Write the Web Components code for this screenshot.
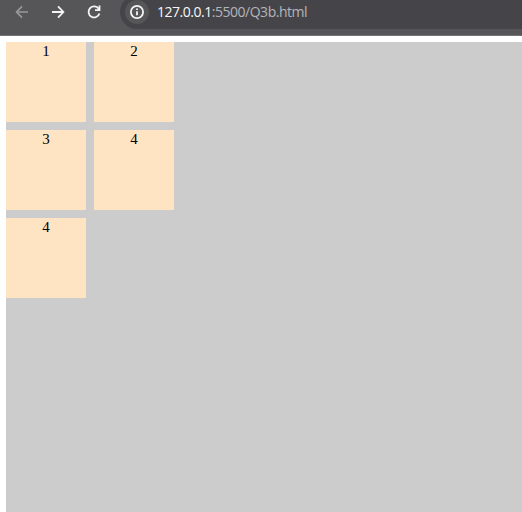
<!DOCTYPE html>
<html lang="en">
<head>
<meta charset="utf-8">
<title>Q3b</title>
<style>
html, body { margin: 0; height: 100%; overflow: hidden; background: #fff; }
body { display: flex; flex-direction: column; }
</style>
</head>
<body>
<browser-bar></browser-bar>
<box-grid>
  <box-item>1</box-item><box-item>2</box-item>
  <box-item>3</box-item><box-item>4</box-item>
  <box-item>4</box-item>
</box-grid>
<script>
class BrowserBar extends HTMLElement {
  constructor() {
    super();
    this.attachShadow({ mode: "open" }).innerHTML = `
    <style>
      :host { display: flex; flex: none; box-sizing: border-box; height: 36px; background: #565558; border-bottom: 1px solid #757275; align-items: flex-start; padding-left: 14px; overflow: hidden; }
      svg { display: block; fill: none; stroke: #f4f4f4; stroke-width: 1.8; }
      .nav { flex: none; width: 16px; height: 24px; margin-right: 20px; }
      .dim { stroke: #99989b; stroke-width: 1.7; }
      .pill { flex: 1; box-sizing: border-box; height: 34px; margin: -5px 0 0 -2px; padding-left: 5px; background: #454449; border-radius: 17px 0 0 17px; display: flex; align-items: center; }
      .info { flex: none; width: 24px; height: 24px; border-radius: 50%; background: #565558; }
      .url { margin-left: 8px; font: 14px/20px "Open Sans", "Noto Sans", sans-serif; letter-spacing: -.48px; color: #b5b4b8; white-space: nowrap; }
      .host { color: #f7f7f8; }
    </style>
    <svg class="nav dim" viewBox="0 0 16 24"><path d="M14 12H3M8 6.4L2.6 12L8 17.6"/></svg>
    <svg class="nav" viewBox="0 0 16 24"><path d="M2 12H13M8 6.4L13.4 12L8 17.6"/></svg>
    <svg class="nav" viewBox="0 0 16 24"><path d="M12.7 8.9A5.5 5.5 0 1 0 13.4 13.4M13.5 5.6V10.1H9"/></svg>
    <div class="pill">
      <svg class="info" viewBox="1 1 24 24"><circle cx="13" cy="13" r="6.1"/><path d="M13 12.2V16.2M13 9.4V11"/></svg>
      <div class="url"><span class="host">127.0.0.1</span>:5500/Q3b.html</div>
    </div>`;
  }
}
class BoxGrid extends HTMLElement {
  constructor() {
    super();
    this.attachShadow({ mode: "open" }).innerHTML = `
    <style>
      :host { display: grid; flex: 1; margin: 6px 0 0 6px; background: #ccc; grid-template-columns: 80px 80px; grid-auto-rows: 80px; gap: 8px; align-content: start; }
    </style><slot></slot>`;
  }
}
class BoxItem extends HTMLElement {
  constructor() {
    super();
    this.attachShadow({ mode: "open" }).innerHTML = `
    <style>
      :host { display: block; background: #ffe4c4; color: #000; text-align: center; font: 15px/18px "Liberation Serif", serif; }
    </style><slot></slot>`;
  }
}
customElements.define("browser-bar", BrowserBar);
customElements.define("box-grid", BoxGrid);
customElements.define("box-item", BoxItem);
</script>
</body>
</html>
